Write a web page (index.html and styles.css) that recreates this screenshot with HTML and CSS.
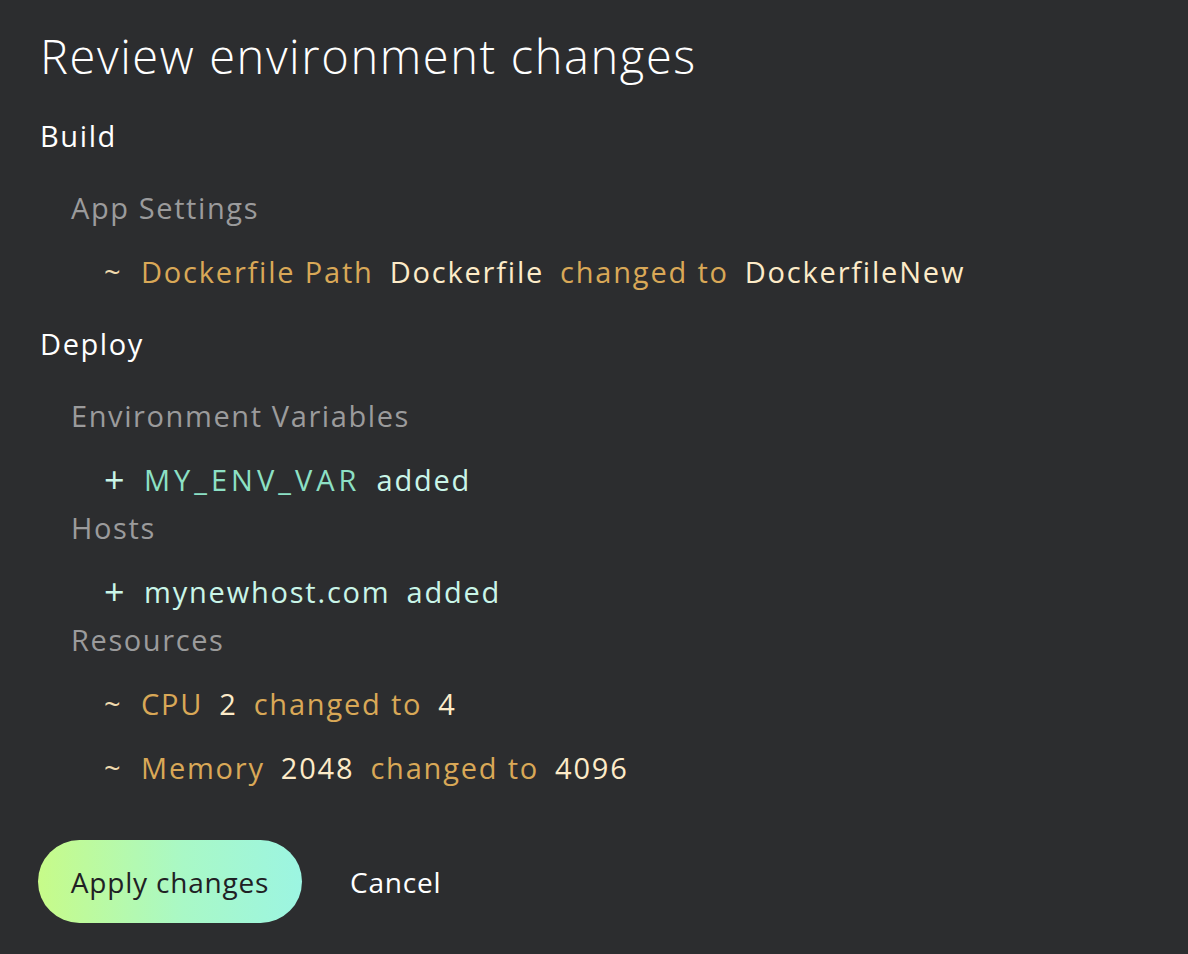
FILE: index.html
```html
<!DOCTYPE html>
<html lang="en">
<head>
<meta charset="utf-8">
<title>Review environment changes</title>
<link rel="stylesheet" href="styles.css">
</head>
<body>
<main class="dialog">
  <h1 class="title">Review environment changes</h1>

  <section class="group">
    <h2 class="group-name">Build</h2>
    <div class="sub">
      <h3 class="sub-name">App Settings</h3>
      <p class="change mod"><span class="sym">~</span><span class="key">Dockerfile Path</span><span class="val">Dockerfile</span><span class="key">changed to</span><span class="val">DockerfileNew</span></p>
    </div>
  </section>

  <section class="group">
    <h2 class="group-name">Deploy</h2>
    <div class="sub">
      <h3 class="sub-name">Environment Variables</h3>
      <p class="change add"><span class="sym">+</span><span class="key caps">MY_ENV_VAR</span><span class="val">added</span></p>
    </div>
    <div class="sub">
      <h3 class="sub-name">Hosts</h3>
      <p class="change add"><span class="sym">+</span><span class="val">mynewhost.com</span><span class="val">added</span></p>
    </div>
    <div class="sub">
      <h3 class="sub-name">Resources</h3>
      <p class="change mod"><span class="sym">~</span><span class="key">CPU</span><span class="val">2</span><span class="key">changed to</span><span class="val">4</span></p>
      <p class="change mod"><span class="sym">~</span><span class="key">Memory</span><span class="val">2048</span><span class="key">changed to</span><span class="val">4096</span></p>
    </div>
  </section>

  <div class="actions">
    <button class="btn-primary">Apply changes</button>
    <button class="btn-text">Cancel</button>
  </div>
</main>
</body>
</html>
```

FILE: styles.css
```css
html, body {
  margin: 0;
  padding: 0;
  background: #2c2d2f;
}
body {
  font-family: "Open Sans", "Lato", sans-serif;
  color: #ffffff;
  min-height: 954px;
}
.dialog {
  padding: 24px 40px 0 40px;
}
.title {
  margin: 0;
  font-size: 47px;
  font-weight: 300;
  line-height: 64px;
  letter-spacing: 1.6px;
}
.group {
  margin-top: 24px;
}
.group-name {
  margin: 0;
  font-size: 29px;
  font-weight: 400;
  line-height: 48px;
  letter-spacing: 1.6px;
}
.sub {
  padding-left: 31px;
}
.group-name + .sub {
  margin-top: 24px;
}
.sub-name {
  margin: 0;
  font-size: 29px;
  font-weight: 400;
  line-height: 48px;
  letter-spacing: 1.6px;
  color: #9b9b9c;
}
.change {
  margin: 16px 0 0 0;
  padding-left: 33px;
  display: flex;
  align-items: center;
  gap: 16px;
  font-size: 29px;
  font-weight: 400;
  line-height: 48px;
  letter-spacing: 1.8px;
}
.change .sym {
  width: 21px;
  flex: none;
}
.add .sym {
  width: 24px;
  font-size: 36px;
  line-height: 48px;
  letter-spacing: 0;
}
.change .caps {
  letter-spacing: 4px;
}
.mod .sym { color: #f0d9ad; }
.mod .key { color: #d9a857; }
.mod .val { color: #fdebc8; }
.add .sym { color: #c9f5e8; }
.add .key { color: #8de0c5; }
.add .val { color: #c9f5e8; }
.actions {
  margin-top: 48px;
  display: flex;
  align-items: center;
  gap: 48px;
  margin-left: -2px;
}
.btn-primary {
  height: 83px;
  width: 264px;
  border: none;
  border-radius: 42px;
  background: linear-gradient(90deg, #c7fb89 0%, #a9f8c6 55%, #9cf5e2 100%);
  color: #1f2124;
  font-family: inherit;
  font-size: 28px;
  font-weight: 400;
  letter-spacing: 0.8px;
  padding: 0;
}
.btn-text {
  border: none;
  background: none;
  color: #ffffff;
  font-family: inherit;
  font-size: 28px;
  font-weight: 400;
  letter-spacing: 0.8px;
  padding: 0;
}
```
